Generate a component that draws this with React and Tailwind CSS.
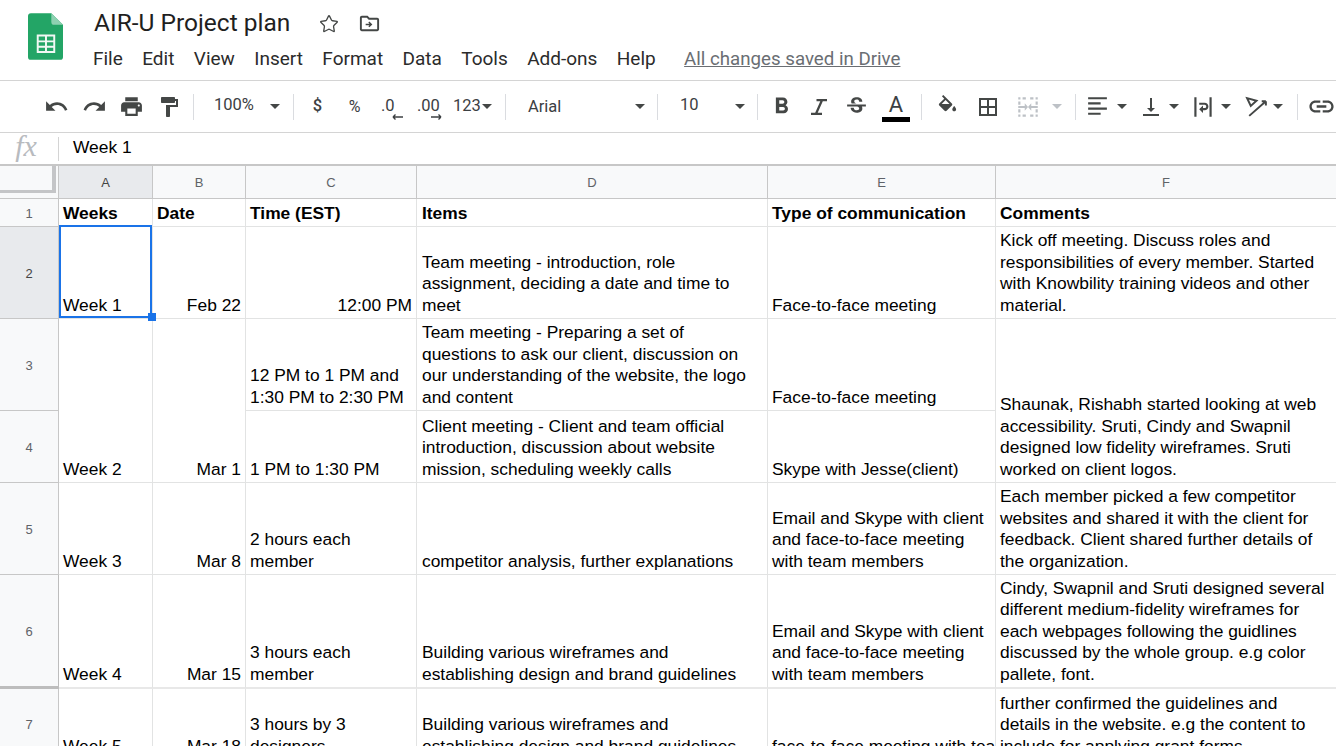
import React from "react";
import { Star } from "lucide-react";

const arial = "font-['Liberation_Sans',Arial,sans-serif]";
const roboto = "font-['Roboto',sans-serif]";

const paths = {
  undo: "M12.5 8c-2.65 0-5.05.99-6.9 2.6L2 7v9h9l-3.62-3.62c1.39-1.16 3.16-1.88 5.12-1.88 3.54 0 6.55 2.31 7.6 5.5l2.37-.78C21.08 11.03 17.15 8 12.5 8z",
  redo: "M18.4 10.6C16.55 8.99 14.15 8 11.5 8c-4.65 0-8.58 3.03-9.96 7.22L3.9 16c1.05-3.19 4.05-5.5 7.6-5.5 1.95 0 3.73.72 5.12 1.88L13 16h9V7l-3.6 3.6z",
  print: "M19 8H5c-1.66 0-3 1.34-3 3v6h4v4h12v-4h4v-6c0-1.66-1.34-3-3-3zm-3 11H8v-5h8v5zm3-7c-.55 0-1-.45-1-1s.45-1 1-1 1 .45 1 1-.45 1-1 1zm-1-9H6v4h12V3z",
  paint: "M18 4V3c0-.55-.45-1-1-1H5c-.55 0-1 .45-1 1v4c0 .55.45 1 1 1h12c.55 0 1-.45 1-1V6h1v4H9v11c0 .55.45 1 1 1h2c.55 0 1-.45 1-1v-9h8V4h-3z",
  bold: "M15.6 10.79c.97-.67 1.65-1.77 1.65-2.79 0-2.26-1.75-4-4-4H7v14h7.04c2.09 0 3.71-1.7 3.71-3.79 0-1.52-.86-2.82-2.15-3.42zM10 6.5h3c.83 0 1.5.67 1.5 1.5s-.67 1.5-1.5 1.5h-3v-3zm3.5 9H10v-3h3.5c.83 0 1.5.67 1.5 1.5s-.67 1.5-1.5 1.5z",
  italic: "M9.5 4H20v2.300h-4.200L10.700 17.700H15V20H4v-2.300h4.200L13.300 6.300H9.500z",
  strike: "M6.85 7.08C6.85 4.37 9.45 3 12.24 3c1.64 0 3 .49 3.9 1.28.77.65 1.46 1.73 1.46 3.24h-3.01c0-.31-.05-.59-.15-.85-.29-.86-1.2-1.28-2.25-1.28-1.86 0-2.34 1.02-2.34 1.7 0 .48.25.88.74 1.21.38.25.77.48 1.41.7H7.39c-.21-.34-.54-.89-.54-1.92zM21 12v-2H3v2h9.62c1.15.45 1.96.75 1.96 1.97 0 1-.81 1.67-2.28 1.67-1.54 0-2.93-.54-2.93-2.51H6.4c0 .55.08 1.13.24 1.58.81 2.29 3.29 3.3 5.67 3.3 2.27 0 5.3-.89 5.3-4.05 0-.3-.01-1.16-.48-1.94H21V12z",
  fill: "M16.56 8.94L7.62 0 6.21 1.41l2.38 2.38-5.15 5.15c-.59.59-.59 1.54 0 2.12l5.5 5.5c.29.29.68.44 1.06.44s.77-.15 1.06-.44l5.5-5.5c.59-.58.59-1.53 0-2.12zM10 5.210L14.100 9.300H5.900zM19 11.5s-2 2.17-2 3.5c0 1.1.9 2 2 2s2-.9 2-2c0-1.33-2-3.5-2-3.5z",
  borders: "M3 3v18h18V3H3zm8 16H5v-6h6v6zm0-8H5V5h6v6zm8 8h-6v-6h6v6zm0-8h-6V5h6v6z",
  merge: "M3 3h2v2H3V3zm4 0h3v2H7V3zm7 0h3v2h-3V3zm5 0h2v2h-2V3zM3 7h2v3H3V7zm16 0h2v3h-2V7zM3 14h2v3H3v-3zm16 0h2v3h-2v-3zM3 19h2v2H3v-2zm4 0h3v2H7v-2zm7 0h3v2h-3v-2zm5 0h2v2h-2v-2zM3 11h6V8.5l3 3.5-3 3.5V13H3v-2zm18 0h-6V8.5L12 12l3 3.5V13h6v-2z",
  align: "M3 3h18v2H3V3zm0 5h12v2H3V8zm0 5h18v2H3v-2zm0 5h12v2H3v-2z",
  valign: "M16 13h-3V3h-2v10H8l4 4 4-4zM4 19v2h16v-2H4z",
  wrap: "M4 3h2v18H4V3zm14 0h2v18h-2V3zM8.5 8h5c1.9 0 3.5 1.6 3.5 3.5S15.4 15 13.5 15H12v2.5L8.5 14l3.5-3.5V13h1.5c.8 0 1.5-.7 1.5-1.5s-.7-1.5-1.5-1.5h-5V8z",
  link: "M3.9 12c0-1.71 1.39-3.1 3.1-3.1h4V7H7c-2.76 0-5 2.24-5 5s2.24 5 5 5h4v-1.9H7c-1.71 0-3.1-1.39-3.1-3.1zM8 13h8v-2H8v2zm9-6h-4v1.9h4c1.71 0 3.1 1.39 3.1 3.1s-1.39 3.1-3.1 3.1h-4V17h4c2.76 0 5-2.24 5-5s-2.24-5-5-5z",
  folder: "M20 6h-8l-2-2H4c-1.1 0-2 .9-2 2v12c0 1.1.9 2 2 2h16c1.1 0 2-.9 2-2V8c0-1.1-.9-2-2-2zm0 12H4V6h5.17l2 2H20v10zm-8.16-2L15 13l-3.16-3-1.06 1.06 1.19 1.19H8v1.5h3.97l-1.19 1.19L11.84 16z",
};

function Icon({ d, size = 22, className = "fill-[#444746]" }) {
  return (
    <svg viewBox="0 0 24 24" width={size} height={size} className={className}>
      <path d={d} />
    </svg>
  );
}

function Tool({ w, children }) {
  return <div className={`flex items-center justify-center h-full shrink-0 ${w}`}>{children}</div>;
}

function Caret({ light }) {
  return (
    <div
      className={`w-0 h-0 border-x-[5px] border-x-transparent border-t-[5px] ${light ? "border-t-[#bdc1c6]" : "border-t-[#444746]"}`}
    />
  );
}

function Divider() {
  return <div className="w-px h-[26px] bg-[#dadce0] shrink-0" />;
}

function Arrow({ left, d }) {
  return (
    <svg viewBox="0 0 11 6" width="11" height="6" className={`absolute top-[20px] ${left}`} fill="none" stroke="#3c4043" strokeWidth="1.400">
      <path d={d} />
    </svg>
  );
}

function SheetsLogo() {
  return (
    <svg viewBox="0 0 36 48" width="35" height="47">
      <path d="M3 0h21l12 12v33a3 3 0 0 1-3 3H3a3 3 0 0 1-3-3V3a3 3 0 0 1 3-3z" fill="#23a566" />
      <path d="M24 0l12 12H27a3 3 0 0 1-3-3z" fill="#8ed1b1" />
      <path d="M9 22h19v19H9zm2 2v4h6.500v-4zm8.500 0v4H26v-4zM11 30v3.500h6.500V30zm8.500 0v3.500H26V30zM11 35.500V39h6.500v-3.500zm8.500 0V39H26v-3.500z" fill="#f1f8f4" fillRule="evenodd" />
    </svg>
  );
}

function Header() {
  const menu = ["File", "Edit", "View", "Insert", "Format", "Data", "Tools", "Add-ons", "Help"];
  return (
    <div className="flex h-[81px] border-b border-[#d4d4d4] shrink-0">
      <div className="w-[93px] pl-[28px] pt-[13px] shrink-0">
        <SheetsLogo />
      </div>
      <div className="flex flex-col">
        <div className="flex items-center h-[32px] mt-[7px] pl-px">
          <span className={`${roboto} text-[24.5px] leading-[32px] text-[#1f1f1f]`}>AIR-U Project plan</span>
          <Star size={20} strokeWidth={1.6} className="ml-[29px] mt-px text-[#444746]" />
          <div className="ml-[19px]">
            <Icon d={paths.folder} size={23} />
          </div>
        </div>
        <div className={`${roboto} flex items-center gap-[19.4px] mt-[5px] text-[19px] leading-[30px] text-[#2b2b2b]`}>
          {menu.map((m) => (
            <span key={m}>{m}</span>
          ))}
          <span className="ml-[9px] text-[18.7px] text-[#6a6e73] underline">All changes saved in Drive</span>
        </div>
      </div>
    </div>
  );
}

function Toolbar() {
  return (
    <div className={`${roboto} flex items-center h-[52px] pl-[37px] border-b border-[#d4d4d4] text-[#3c4043] shrink-0`}>
      <Tool w="w-[38px]"><Icon d={paths.undo} size={25} /></Tool>
      <Tool w="w-[38px]"><Icon d={paths.redo} size={25} /></Tool>
      <Tool w="w-[37px]"><Icon d={paths.print} size={25} /></Tool>
      <Tool w="w-[38px]"><Icon d={paths.paint} size={24} /></Tool>
      <div className="w-[5px]" />
      <Divider />
      <div className="flex items-center w-[99px] pl-[20px] text-[16.5px]">
        <span className="w-[56px] -mt-[2px]">100%</span>
        <Caret />
      </div>
      <Divider />
      <div className="w-[5px]" />
      <span className="w-[37px] text-[16.5px] text-center font-medium">$</span>
      <span className="w-[37px] text-[16px] text-center">%</span>
      <div className="relative w-[37px] pl-[8px] text-[16.5px]">
        .0
        <Arrow left="left-[19px]" d="M11 3H1M1 3l2.500-2.500M1 3l2.500 2.500" />
      </div>
      <div className="relative w-[38px] pl-[7px] text-[16.5px]">
        .00
        <Arrow left="left-[21px]" d="M0 3h10M10 3L7.500.500M10 3L7.500 5.500" />
      </div>
      <div className="w-[5px]" />
      <span className="text-[16.5px] w-[29px]">123</span>
      <Caret />
      <div className="w-[13px]" />
      <Divider />
      <div className="flex items-center w-[151px] pl-[22px] text-[16.5px]">
        <span className="w-[107px] mt-px">Arial</span>
        <Caret />
      </div>
      <Divider />
      <div className="flex items-center w-[99px] pl-[22px] text-[16.5px]">
        <span className="w-[55px] -mt-[3px]">10</span>
        <Caret />
      </div>
      <Divider />
      <div className="w-[5px]" />
      <Tool w="w-[36px]"><Icon d={paths.bold} size={27} /></Tool>
      <Tool w="w-[40px]"><Icon d={paths.italic} size={24} /></Tool>
      <Tool w="w-[34px]"><Icon d={paths.strike} size={25} /></Tool>
      <div className="flex flex-col items-center w-[46px] mt-[3px]">
        <span className="text-[22px] leading-[22px]">A</span>
        <div className="w-[28px] h-[5px] bg-black mt-px" />
      </div>
      <div className="w-[2px]" />
      <Divider />
      <div className="w-[6px]" />
      <Tool w="w-[38px]"><Icon d={paths.fill} size={23} /></Tool>
      <Tool w="w-[44px]"><Icon d={paths.borders} size={24} /></Tool>
      <Tool w="w-[36px]"><Icon d={paths.merge} size={26} className="fill-[#bdc1c6]" /></Tool>
      <Tool w="w-[22px]"><Caret light /></Tool>
      <div className="w-[7px]" />
      <Divider />
      <Tool w="w-[43px]"><Icon d={paths.align} size={25} /></Tool>
      <Tool w="w-[6px]"><Caret /></Tool>
      <div className="w-[11px]" />
      <Tool w="w-[30px]"><Icon d={paths.valign} size={24} /></Tool>
      <Tool w="w-[16px]"><Caret /></Tool>
      <div className="w-[6px]" />
      <Tool w="w-[30px]"><Icon d={paths.wrap} size={26} /></Tool>
      <Tool w="w-[16px]"><Caret /></Tool>
      <div className="w-[7px]" />
      <Tool w="w-[30px]">
        <svg viewBox="0 0 24 24" width="25" height="25" fill="none" stroke="#444746" strokeWidth="1.9">
          <path d="M3 4l9 2.500-5.500 5z" />
          <path d="M5 21L21 7M21 7h-4M21 7v4" />
        </svg>
      </Tool>
      <Tool w="w-[14px]"><Caret /></Tool>
      <div className="w-[12px]" />
      <Divider />
      <div className="w-[9px]" />
      <Icon d={paths.link} size={29} />
    </div>
  );
}

function FormulaBar() {
  return (
    <div className="flex items-center h-[33px] border-b-2 border-[#c7c7c7] shrink-0">
      <div className="w-[59px] flex items-center justify-center border-r border-[#d4d4d4] h-[24px] shrink-0">
        <span className="font-['Liberation_Serif',serif] italic text-[30px] leading-[24px] text-[#b8bbbf] pr-[6px] pb-[5px]">fx</span>
      </div>
      <span className={`${arial} pl-[14px] pb-[2px] text-[17.4px] text-black`}>Week 1</span>
    </div>
  );
}

function ColHead({ label, active }) {
  return (
    <div
      className={`${arial} flex items-center justify-center pt-[2px] border-r border-b border-[#c7c7c7] text-[13px] ${active ? "bg-[#e8eaed] text-[#444]" : "bg-[#f8f9fa] text-[#5f6368]"}`}
    >
      {label}
    </div>
  );
}

function RowHead({ n, active, thick }) {
  return (
    <div
      className={`${arial} flex items-center justify-center pt-[2px] border-r text-[13px] ${thick ? "border-b-[3px] border-[#bdbdbd]" : "border-b border-[#c7c7c7]"} ${active ? "bg-[#e8eaed] text-[#444]" : "bg-[#f8f9fa] text-[#5f6368]"}`}
    >
      {n}
    </div>
  );
}

function Cell({ children, right, bold, className = "" }) {
  return (
    <div
      className={`${arial} flex min-w-0 overflow-hidden border-r border-b border-[#e2e3e3] pl-[4px] pr-[4px] text-[17.4px] leading-[21.4px] text-black ${right ? "justify-end text-right" : ""} ${bold ? "font-bold items-center pt-[2px]" : "items-end pb-[2px]"} ${className}`}
    >
      <div className="min-w-0">{children}</div>
    </div>
  );
}

function Sheet() {
  const items = "pl-[5px] pr-[16px]";
  const comments = "pr-[8px]";
  const thick = "border-b-2 border-b-[#e8e8e8]";
  return (
    <div className="grid grid-cols-[59px_94px_93px_171px_351px_228px_341px] grid-rows-[33px_28px_92px_92px_72px_92px_114px_71px]">
      <div className="bg-[#f8f9fa] border-b border-r border-[#c7c7c7] pb-[5px] pr-[2px]">
        <div className="h-full border-r-4 border-b-[3px] border-[#c4c5c7]" />
      </div>
      <ColHead label="A" active />
      {["B", "C", "D", "E", "F"].map((c) => (
        <ColHead key={c} label={c} />
      ))}

      <RowHead n={1} />
      <Cell bold>Weeks</Cell>
      <Cell bold>Date</Cell>
      <Cell bold>Time (EST)</Cell>
      <Cell bold className={items}>Items</Cell>
      <Cell bold>Type of communication</Cell>
      <Cell bold>Comments</Cell>

      <RowHead n={2} active />
      <div className="relative border-r border-b border-[#e2e3e3]">
        <div className={`${arial} absolute -top-[2px] inset-x-0 bottom-0 border-2 border-[#1a73e8] flex items-end pl-[2px] text-[17.4px] leading-[21.4px] text-black`}>
          Week 1
        </div>
        <div className="absolute -right-[4px] -bottom-[3px] w-[8px] h-[8px] bg-[#1a73e8]" />
      </div>
      <Cell right>Feb 22</Cell>
      <Cell right>12:00 PM</Cell>
      <Cell className={items}>Team meeting - introduction, role assignment, deciding a date and time to meet</Cell>
      <Cell>Face-to-face meeting</Cell>
      <Cell className={comments}>Kick off meeting. Discuss roles and responsibilities of every member. Started with Knowbility training videos and other material.</Cell>

      <RowHead n={3} />
      <Cell className="row-span-2">Week 2</Cell>
      <Cell right className="row-span-2">Mar 1</Cell>
      <Cell>12 PM to 1 PM and 1:30 PM to 2:30 PM</Cell>
      <Cell className={items}>Team meeting - Preparing a set of questions to ask our client, discussion on our understanding of the website, the logo and content</Cell>
      <Cell>Face-to-face meeting</Cell>
      <Cell className={`row-span-2 ${comments}`}>Shaunak, Rishabh started looking at web accessibility. Sruti, Cindy and Swapnil designed low fidelity wireframes. Sruti worked on client logos.</Cell>

      <RowHead n={4} />
      <Cell>1 PM to 1:30 PM</Cell>
      <Cell className={items}>Client meeting - Client and team official introduction, discussion about website mission, scheduling weekly calls</Cell>
      <Cell>Skype with Jesse(client)</Cell>

      <RowHead n={5} />
      <Cell>Week 3</Cell>
      <Cell right>Mar 8</Cell>
      <Cell>2 hours each member</Cell>
      <Cell className={items}>competitor analysis, further explanations</Cell>
      <Cell>Email and Skype with client and face-to-face meeting with team members</Cell>
      <Cell className={comments}>Each member picked a few competitor websites and shared it with the client for feedback. Client shared further details of the organization.</Cell>

      <RowHead n={6} thick />
      <Cell className={thick}>Week 4</Cell>
      <Cell right className={thick}>Mar 15</Cell>
      <Cell className={thick}>3 hours each member</Cell>
      <Cell className={`${thick} ${items}`}>Building various wireframes and establishing design and brand guidelines</Cell>
      <Cell className={thick}>Email and Skype with client and face-to-face meeting with team members</Cell>
      <Cell className={`${thick} ${comments}`}>Cindy, Swapnil and Sruti designed several different medium-fidelity wireframes for each webpages following the guidlines discussed by the whole group. e.g color pallete, font.</Cell>

      <RowHead n={7} />
      <Cell>Week 5</Cell>
      <Cell right>Mar 18</Cell>
      <Cell>3 hours by 3 designers</Cell>
      <Cell className={items}>Building various wireframes and establishing design and brand guidelines</Cell>
      <Cell><div className="whitespace-nowrap">face-to-face meeting with team members</div></Cell>
      <Cell className={comments}>further confirmed the guidelines and details in the website. e.g the content to include for applying grant forms</Cell>
    </div>
  );
}

export default function App() {
  return (
    <div className="flex flex-col w-[1336px] h-[746px] overflow-hidden bg-white">
      <Header />
      <Toolbar />
      <FormulaBar />
      <Sheet />
    </div>
  );
}
